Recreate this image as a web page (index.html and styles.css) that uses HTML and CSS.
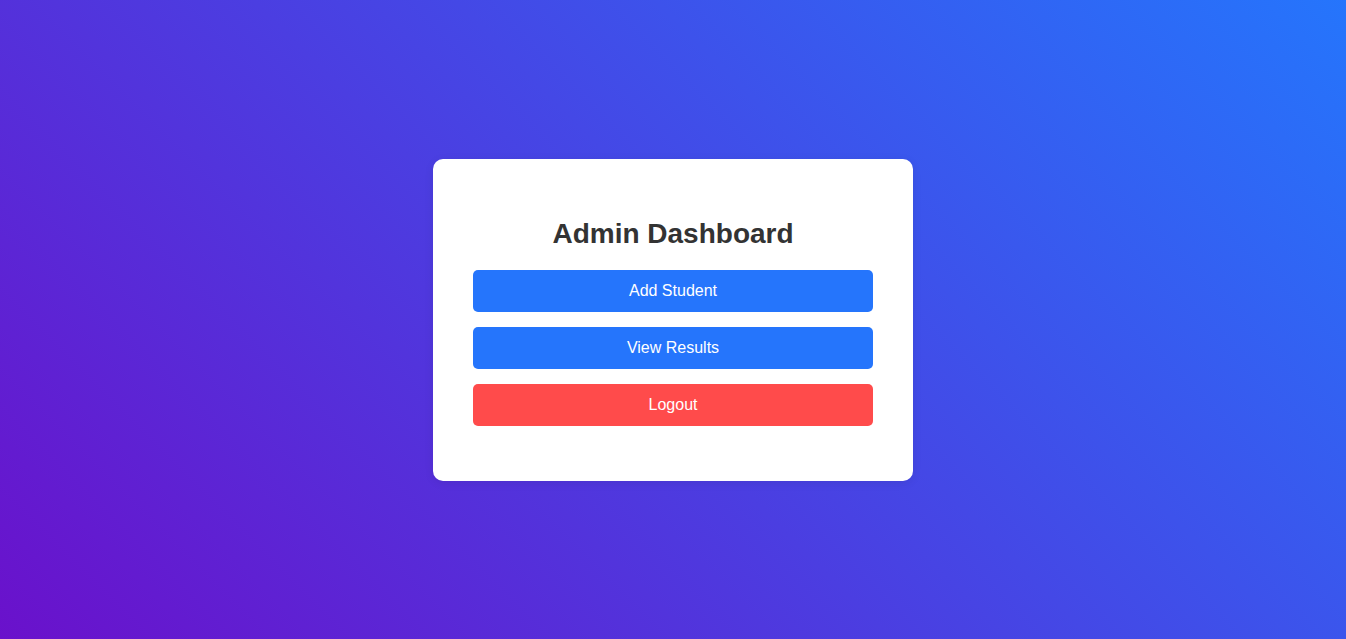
FILE: index.html
```html
<!DOCTYPE html>
<html lang="en">
<head>
<meta charset="UTF-8">
<title>Admin Dashboard</title>
<link rel="stylesheet" href="styles.css">
</head>
<body>
<div class="card">
  <h2 class="title">Admin Dashboard</h2>
  <button class="btn btn-blue">Add Student</button>
  <button class="btn btn-blue">View Results</button>
  <button class="btn btn-red">Logout</button>
</div>
</body>
</html>
```
FILE: styles.css
```css
html, body {
  margin: 0;
  padding: 0;
}
body {
  min-height: 100vh;
  display: flex;
  align-items: center;
  justify-content: center;
  background: linear-gradient(45deg, #6a11cb, #2575fc);
  font-family: "Liberation Sans", Arial, sans-serif;
}
.card {
  width: 400px;
  padding: 40px;
  background: #fff;
  border-radius: 10px;
  box-shadow: 0 2px 10px rgba(0, 0, 0, 0.08);
  display: flex;
  flex-direction: column;
  align-items: stretch;
}
.title {
  margin: 19px 0 20px;
  font-size: 28px;
  font-weight: bold;
  color: #333;
  text-align: center;
  line-height: 32px;
}
.btn {
  display: block;
  width: 100%;
  height: 42px;
  margin: 0 0 15px;
  padding: 0;
  border: none;
  border-radius: 5px;
  color: #fff;
  font-family: "Liberation Sans", Arial, sans-serif;
  font-size: 16px;
  cursor: pointer;
}
.btn-blue {
  background: #2575fc;
}
.btn-red {
  background: #ff4b4b;
}
```
